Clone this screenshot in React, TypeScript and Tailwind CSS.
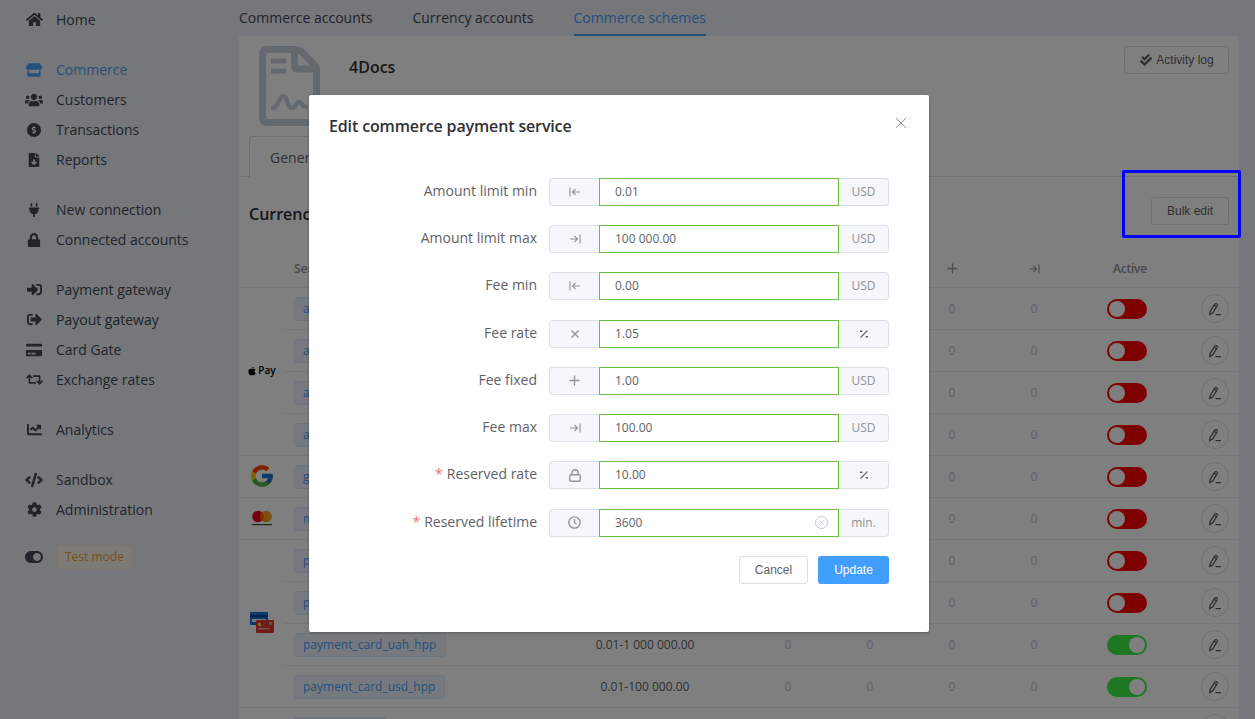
import React from "react";
import {
  FaHome, FaStore, FaUsers, FaFileDownload, FaPlug, FaLock, FaSignInAlt, FaSignOutAlt, FaCreditCard,
  FaRetweet, FaChartLine, FaCode, FaCog, FaToggleOn, FaCheckDouble, FaApple, FaDollarSign,
} from "react-icons/fa";
import { FcGoogle } from "react-icons/fc";

const FONT = "font-['Open_Sans','Noto_Sans',sans-serif]";
const ARIAL = "font-['Liberation_Sans',Arial,sans-serif]";

function DollarCircle() {
  return (
    <span className="flex h-[14px] w-[14px] items-center justify-center rounded-full bg-[#404450] text-white">
      <FaDollarSign size={8} />
    </span>
  );
}

const groups: { icon: React.ReactNode; label: string; active?: boolean }[][] = [
  [{ icon: <FaHome size={17} />, label: "Home" }],
  [
    { icon: <FaStore size={16} />, label: "Commerce", active: true },
    { icon: <FaUsers size={18} />, label: "Customers" },
    { icon: <DollarCircle />, label: "Transactions" },
    { icon: <FaFileDownload size={14} />, label: "Reports" },
  ],
  [
    { icon: <FaPlug size={14} />, label: "New connection" },
    { icon: <FaLock size={14} />, label: "Connected accounts" },
  ],
  [
    { icon: <FaSignInAlt size={15} />, label: "Payment gateway" },
    { icon: <FaSignOutAlt size={15} />, label: "Payout gateway" },
    { icon: <FaCreditCard size={16} />, label: "Card Gate" },
    { icon: <FaRetweet size={17} />, label: "Exchange rates" },
  ],
  [{ icon: <FaChartLine size={15} />, label: "Analytics" }],
  [
    { icon: <FaCode size={18} />, label: "Sandbox" },
    { icon: <FaCog size={15} />, label: "Administration" },
  ],
];

function Sidebar() {
  return (
    <aside className="w-[239px] shrink-0 pl-[25px] pt-[5px] text-[14px] text-[#444856]">
      {groups.map((g, i) => (
        <div key={i} className="mb-5">
          {g.map((it) => (
            <div key={it.label} className={`flex h-[30px] items-center gap-[13px] pb-[1px] ${it.active ? "text-[#4a9ffa]" : ""}`}>
              <span className="flex w-[18px] justify-center">{it.icon}</span>
              <span>{it.label}</span>
            </div>
          ))}
        </div>
      ))}
      <div className="flex h-[24px] items-center gap-[13px]">
        <span className="flex w-[18px] justify-center"><FaToggleOn size={18} /></span>
        <span className="flex h-[24px] items-center rounded-[3px] border border-[#faecd8] bg-[#fdf6ec] px-[8px] text-[12px] text-[#e6a23c]">Test mode</span>
      </div>
    </aside>
  );
}

function PenIcon() {
  return (
    <svg width="14" height="14" viewBox="0 0 14 14" fill="none" stroke="#505258" strokeWidth="1.2">
      <path d="M1.8 12.6 L2.2 9.5 L6.8 2.2 Q7.6 1.2 8.7 1.8 Q9.8 2.6 9.2 3.7 L4.6 11 Z" />
      <path d="M6.6 3.4 L8.6 4.7" />
      <path d="M7.5 12.6 H13" />
    </svg>
  );
}

function ArrowLeftBar() {
  return (
    <svg width="12" height="12" viewBox="0 0 12 12" fill="none" stroke="currentColor" strokeWidth="1.1">
      <path d="M1 1.5 V10.5" />
      <path d="M11 6 H3.5 M6.5 3 L3.5 6 L6.5 9" />
    </svg>
  );
}

function ArrowRightBar() {
  return (
    <svg width="12" height="12" viewBox="0 0 12 12" fill="none" stroke="currentColor" strokeWidth="1.1">
      <path d="M11 1.5 V10.5" />
      <path d="M1 6 H8.5 M5.5 3 L8.5 6 L5.5 9" />
    </svg>
  );
}

function PlusIcon() {
  return (
    <svg width="11" height="11" viewBox="0 0 11 11" fill="none" stroke="currentColor" strokeWidth="1.3">
      <path d="M5.5 .5 V10.5 M.5 5.5 H10.5" />
    </svg>
  );
}

function TimesIcon() {
  return (
    <svg width="10" height="10" viewBox="0 0 10 10" fill="none" stroke="currentColor" strokeWidth="1.4">
      <path d="M1.5 1.5 L8.5 8.5 M8.5 1.5 L1.5 8.5" />
    </svg>
  );
}

function PercentIcon() {
  return (
    <svg width="10" height="10" viewBox="0 0 10 10" fill="none" stroke="#606266" strokeWidth="1.1">
      <path d="M8.5 1.5 L1.5 8.5" />
      <path d="M1 1.5 H3.4 V3 H1 Z M6.6 7 H9 V8.5 H6.6 Z" fill="#606266" stroke="none" />
    </svg>
  );
}

function LockIcon() {
  return (
    <svg width="12" height="13" viewBox="0 0 12 13" fill="none" stroke="currentColor" strokeWidth="1.4">
      <rect x=".8" y="5.7" width="10.4" height="6.6" rx="1" />
      <path d="M3 5.7 V3.8 A3 3 0 0 1 9 3.8 V5.7" />
    </svg>
  );
}

function ClockIcon() {
  return (
    <svg width="13" height="13" viewBox="0 0 13 13" fill="none" stroke="currentColor" strokeWidth="1.4">
      <circle cx="6.5" cy="6.5" r="5.6" />
      <path d="M6.5 3 V6.8 L8.5 8" />
    </svg>
  );
}

function DocIcon() {
  return (
    <svg width="61" height="80" viewBox="0 0 61 80" fill="none" stroke="#c8d2de" strokeWidth="7">
      <path d="M34 3.5 H9 Q3.5 3.5 3.5 9 V71 Q3.5 76.5 9 76.5 H52 Q57.5 76.5 57.5 71 V24 Q57.5 21 55 18.5 L43 6 Q40 3.5 37 3.5 Z" />
      <path d="M35.5 3.5 V19 Q35.5 23 39 23 H57.5" />
      <path d="M12 15 H27 M12 25 H27" strokeWidth="5" />
      <path d="M14 62 C19 62 20 50 24.5 50 C29 50 27 62 33 62 C37 62 37 56 40 56 C43 56 43 61 47 61" strokeWidth="4.5" strokeLinecap="round" />
    </svg>
  );
}

function Mastercard() {
  return (
    <svg width="22" height="16" viewBox="0 0 22 16" className="mb-[2px]">
      <circle cx="7" cy="6.5" r="5.8" fill="#eb001b" />
      <circle cx="15" cy="6.5" r="5.8" fill="#f79e1b" />
      <path d="M11 2.2 A5.8 5.8 0 0 1 11 10.8 A5.8 5.8 0 0 1 11 2.2" fill="#ff5f00" />
      <rect x="1" y="14" width="20" height="1.2" fill="#444" />
    </svg>
  );
}

function Cards() {
  return (
    <svg width="24" height="22" viewBox="0 0 24 22" className="mb-[2px]">
      <rect x="0" y="0" width="18" height="13" rx="1" fill="#1976d2" />
      <rect x="0" y="3" width="18" height="2.5" fill="#0d47a1" />
      <rect x="2" y="7" width="14" height="3" fill="#e3f2fd" />
      <rect x="6" y="8" width="18" height="13" rx="1" fill="#e53935" />
      <rect x="8" y="11" width="3" height="3" fill="#ffd54f" />
      <rect x="19" y="10" width="3" height="3" fill="#81c784" />
      <rect x="8" y="16" width="12" height="1.5" fill="#ef9a9a" />
    </svg>
  );
}

function Toggle({ on }: { on: boolean }) {
  return (
    <span className={`flex h-[20px] w-[40px] items-center rounded-full p-[2px] ${on ? "justify-end bg-[#3cf046]" : "justify-start bg-[#ff0000]"}`}>
      <span className="h-[16px] w-[16px] rounded-full bg-white" />
    </span>
  );
}

const COLS = "grid grid-cols-[259px_204px_82px_82px_82px_82px_104px_1fr] items-center";

function Row({ tag, limit, on, last }: { tag: string; limit: string; on: boolean; last: boolean }) {
  return (
    <div className={`${COLS} text-[12px] ${last ? "h-[41px]" : "h-[42px] border-b border-[#ebeef5]"}`}>
      <div className="pl-[10px]">
        <span className="inline-flex h-[24px] items-center rounded-[3px] border border-[#d9ecff] bg-[#ecf5ff] pl-[8px] pr-[9px] text-[#4a9ffa]">{tag}</span>
      </div>
      <div className="text-center text-[#606266]">{limit}</div>
      {[0, 1, 2, 3].map((i) => (
        <div key={i} className="text-center text-[#c0c4cc]">0</div>
      ))}
      <div className="flex justify-center"><Toggle on={on} /></div>
      <div className="flex justify-end pr-[10px]">
        <span className="flex h-[29px] w-[28px] items-center justify-center rounded-full border border-[#dcdfe6]"><PenIcon /></span>
      </div>
    </div>
  );
}

const tableGroups: { logo: React.ReactNode; rows: { tag: string; limit: string; on: boolean }[] }[] = [
  {
    logo: (
      <span className="flex items-center gap-[1px] pb-[2px] text-[10px] font-semibold text-black">
        <FaApple size={10} />Pay
      </span>
    ),
    rows: [
      { tag: "apple_pay_eur_hpp", limit: "0.01-100 000.00", on: false },
      { tag: "apple_pay_rub_hpp", limit: "0.01-100 000.00", on: false },
      { tag: "apple_pay_uah_hpp", limit: "0.01-1 000 000.00", on: false },
      { tag: "apple_pay_usd_hpp", limit: "0.01-100 000.00", on: false },
    ],
  },
  { logo: <FcGoogle size={26} className="mb-[2px]" />, rows: [{ tag: "google_pay_uah_hpp", limit: "0.01-100 000.00", on: false }] },
  { logo: <Mastercard />, rows: [{ tag: "masterpass_uah_hpp", limit: "0.01-100 000.00", on: false }] },
  {
    logo: <Cards />,
    rows: [
      { tag: "payment_card_eur_hpp", limit: "0.01-100 000.00", on: false },
      { tag: "payment_card_rub_hpp", limit: "0.01-100 000.00", on: false },
      { tag: "payment_card_uah_hpp", limit: "0.01-1 000 000.00", on: true },
      { tag: "payment_card_usd_hpp", limit: "0.01-100 000.00", on: true },
    ],
  },
];

function Main() {
  return (
    <main className="flex h-[719px] min-w-0 flex-1 flex-col overflow-hidden pr-4">
      <nav className="flex h-[36px] shrink-0 gap-[40px] text-[14px] text-[#444856]">
        <span className="flex items-center pb-[2px]">Commerce accounts</span>
        <span className="flex items-center pb-[2px]">Currency accounts</span>
        <span className="flex items-center border-b-2 border-[#48a0f0] text-[#4a9ffa]">Commerce schemes</span>
      </nav>
      <section className="flex-1 shrink-0 bg-white">
        <div className="flex h-[100px] items-start justify-between pl-[20px] pr-[10px] pt-[10px]">
          <div className="flex items-start gap-[29px]">
            <DocIcon />
            <h1 className="pt-[9px] text-[16px] font-semibold text-[#303133]">4Docs</h1>
          </div>
          <button className={`${ARIAL} flex h-[28px] w-[105px] items-center justify-center gap-[4px] rounded-[3px] border border-[#dcdfe6] pl-[1px] text-[12px] text-[#606266]`}>
            <FaCheckDouble size={12} />Activity log
          </button>
        </div>
        <div className="h-[41px] border-b border-[#dcdfe6] pl-[10px]">
          <div className="flex h-[41px] w-[100px] items-center rounded-t-[4px] border border-b-0 border-[#dcdfe6] bg-white px-[20px] text-[14px] text-[#606266]">General</div>
        </div>
        <div className="flex h-[69px] items-center justify-between pb-[1px] pl-[10px] pr-[10px]">
          <h2 className="pt-[5px] text-[16px] font-semibold text-[#303133]">Currency accounts</h2>
          <button className={`${ARIAL} h-[28px] w-[78px] rounded-[3px] border border-[#dcdfe6] text-[12px] text-[#606266]`}>Bulk edit</button>
        </div>
        <div className="flex h-[42px] border-b border-[#ebeef5] pt-[4px] text-[12px] font-semibold text-[#909399]">
          <div className="w-[45px] shrink-0" />
          <div className={`${COLS} flex-1`}>
            <div className="pl-[10px]">Service</div>
            <div className="text-center">Limits</div>
            <div className="flex justify-center"><ArrowLeftBar /></div>
            <div className="flex justify-center"><TimesIcon /></div>
            <div className="flex justify-center"><PlusIcon /></div>
            <div className="flex justify-center"><ArrowRightBar /></div>
            <div className="pl-[6px] text-center tracking-[-0.2px]">Active</div>
            <div />
          </div>
        </div>
        {tableGroups.map((g, i) => (
          <div key={i} className="flex border-b border-[#ebeef5]">
            <div className="flex w-[45px] shrink-0 items-center justify-center">{g.logo}</div>
            <div className="min-w-0 flex-1">
              {g.rows.map((r, j) => (
                <Row key={r.tag} {...r} last={j === g.rows.length - 1} />
              ))}
            </div>
          </div>
        ))}
        <div className="flex h-[42px]">
          <div className="w-[45px] shrink-0" />
          <div className="min-w-0 flex-1">
            <Row tag="privat24_uah" limit="0.01-100 000.00" on={true} last />
          </div>
        </div>
      </section>
    </main>
  );
}

const fields: { label: string; prefix: React.ReactNode; value: string; suffix: React.ReactNode; required?: boolean; clear?: boolean }[] = [
  { label: "Amount limit min", prefix: <ArrowLeftBar />, value: "0.01", suffix: "USD" },
  { label: "Amount limit max", prefix: <ArrowRightBar />, value: "100 000.00", suffix: "USD" },
  { label: "Fee min", prefix: <ArrowLeftBar />, value: "0.00", suffix: "USD" },
  { label: "Fee rate", prefix: <TimesIcon />, value: "1.05", suffix: <PercentIcon /> },
  { label: "Fee fixed", prefix: <PlusIcon />, value: "1.00", suffix: "USD" },
  { label: "Fee max", prefix: <ArrowRightBar />, value: "100.00", suffix: "USD" },
  { label: "Reserved rate", prefix: <LockIcon />, value: "10.00", suffix: <PercentIcon />, required: true },
  { label: "Reserved lifetime", prefix: <ClockIcon />, value: "3600", suffix: "min.", required: true, clear: true },
];

function Modal() {
  return (
    <div className="flex h-[537px] w-[620px] flex-col rounded-[2px] bg-white shadow-[0_1px_3px_rgba(0,0,0,0.3)]">
      <div className="flex items-start justify-between pl-[20px] pr-[22px] pt-[20px]">
        <h3 className="text-[16px] leading-[22px] font-semibold tracking-[-0.14px] text-[#303133]">Edit commerce payment service</h3>
        <svg width="12" height="12" viewBox="0 0 12 12" stroke="#909399" strokeWidth="1" className="mt-[2px]">
          <path d="M1 1 L11 11 M11 1 L1 11" />
        </svg>
      </div>
      <div className="flex flex-col gap-[19.25px] pr-[40px] pt-[40.9px]">
        {fields.map((f) => (
          <div key={f.label} className="flex h-[28px] items-center">
            <label className="w-[228px] pb-[3px] text-right text-[14px] text-[#606266]">
              {f.required && <span className="mr-[4px] text-[#f56c6c]">*</span>}
              {f.label}
            </label>
            <div className="ml-[12px] flex h-[28px] w-[340px] text-[12px] text-[#909399]">
              <span className="flex w-[50px] items-center justify-center rounded-l-[4px] border border-r-0 border-[#dcdfe6] bg-[#f5f7fa]">{f.prefix}</span>
              <span className="flex w-[240px] items-center justify-between border border-[#67c23a] pl-[15px] pr-[10px] text-[#606266]">
                <span>{f.value}</span>
                {f.clear && (
                  <svg width="13" height="13" viewBox="0 0 13 13" fill="none" stroke="#c0c4cc" strokeWidth="1">
                    <circle cx="6.5" cy="6.5" r="6" />
                    <path d="M4.5 4.5 L8.5 8.5 M8.5 4.5 L4.5 8.5" />
                  </svg>
                )}
              </span>
              <span className="flex w-[50px] items-center justify-center rounded-r-[4px] border border-l-0 border-[#dcdfe6] bg-[#f5f7fa]">{f.suffix}</span>
            </div>
          </div>
        ))}
      </div>
      <div className={`${ARIAL} flex justify-end gap-[10px] pr-[40px] pt-[19px] text-[12px]`}>
        <button className="h-[28px] w-[69px] rounded-[3px] border border-[#dcdfe6] bg-white text-[#606266]">Cancel</button>
        <button className="h-[28px] w-[71px] rounded-[3px] bg-[#409eff] text-white">Update</button>
      </div>
    </div>
  );
}

export default function App() {
  return (
    <div className={`${FONT} relative flex h-[719px] w-full overflow-hidden bg-[#eaeef4]`}>
      <Sidebar />
      <Main />
      <div className="absolute left-[1122px] top-[170px] z-20 h-[68px] w-[119px] rounded-[2px] border-[3px] border-[#0000ff]" />
      <div className="absolute inset-0 z-10 flex justify-center bg-black/50 pr-[17px] pt-[95px]">
        <Modal />
      </div>
    </div>
  );
}
